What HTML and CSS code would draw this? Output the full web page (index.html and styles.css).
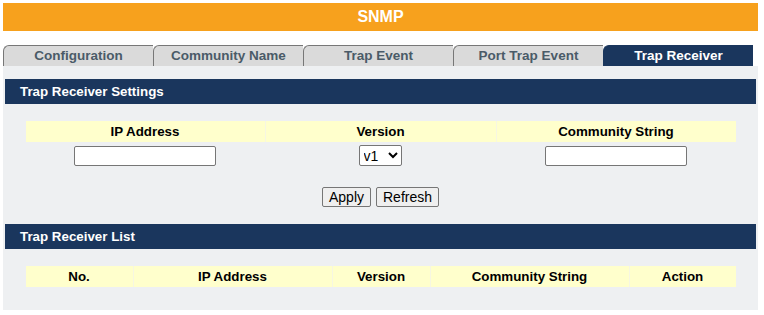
FILE: index.html
```html
<!DOCTYPE html>
<html>
<head>
<meta charset="utf-8">
<link rel="stylesheet" href="styles.css">
</head>
<body>
<div class="page">
  <div class="title">SNMP</div>
  <div class="tabs">
    <div class="tab">Configuration</div>
    <div class="tab">Community Name</div>
    <div class="tab">Trap Event</div>
    <div class="tab">Port Trap Event</div>
    <div class="tab active">Trap Receiver</div>
  </div>
  <div class="panel">
    <div class="section-head">Trap Receiver Settings</div>
    <div class="grid settings">
      <div class="hcell">IP Address</div>
      <div class="hcell">Version</div>
      <div class="hcell">Community String</div>
      <div class="cell"><input class="text" type="text"></div>
      <div class="cell"><select class="sel"><option>v1</option><option>v2c</option></select></div>
      <div class="cell"><input class="text" type="text"></div>
    </div>
    <div class="buttons">
      <button class="btn">Apply</button>
      <button class="btn">Refresh</button>
    </div>
    <div class="section-head second">Trap Receiver List</div>
    <div class="grid list">
      <div class="hcell">No.</div>
      <div class="hcell">IP Address</div>
      <div class="hcell">Version</div>
      <div class="hcell">Community String</div>
      <div class="hcell">Action</div>
    </div>
  </div>
</div>
</body>
</html>
```
FILE: styles.css
```css
html, body {
  margin: 0;
  padding: 0;
  background: #ffffff;
}
body {
  font-family: "Liberation Sans", Arial, sans-serif;
  font-size: 13.33px;
}
.page {
  padding: 3px 6px 0 3px;
}
.title {
  height: 28px;
  line-height: 28px;
  background: #f7a11d;
  color: #ffffff;
  font-weight: bold;
  font-size: 16px;
  text-align: center;
}
.tabs {
  display: flex;
  margin-top: 14px;
  height: 21px;
}
.tab {
  width: 150px;
  box-sizing: border-box;
  background: #dadada;
  border-top: 1px solid #777777;
  border-left: 1px solid #777777;
  border-top-left-radius: 6px;
  color: #4a5b68;
  font-weight: bold;
  font-size: 13.5px;
  text-align: center;
  line-height: 20px;
}
.tab.active {
  background: #1a365d;
  border-color: #1a365d;
  color: #ffffff;
}
.panel {
  background: #eef0f2;
  height: 244px;
  padding: 13px 2px 0 2px;
  box-sizing: border-box;
}
.section-head {
  height: 25px;
  line-height: 25px;
  background: #1a365d;
  color: #ffffff;
  font-weight: bold;
  padding-left: 15px;
}
.section-head.second {
  margin-top: 17px;
}
.grid {
  display: grid;
  width: 710px;
  margin: 0 auto;
}
.settings {
  margin-top: 17px;
  grid-template-columns: 239px 231px 240px;
}
.list {
  margin-top: 17px;
  grid-template-columns: 107px 199px 98px 199px 107px;
}
.hcell {
  background: #ffffcc;
  height: 21px;
  line-height: 21px;
  text-align: center;
  font-weight: bold;
  color: #000000;
  border-left: 1px solid #f6f6e2;
}
.hcell:first-child {
  border-left: none;
}
.cell {
  display: flex;
  justify-content: center;
  align-items: center;
  padding-top: 3px;
}
.text {
  width: 142px;
  height: 20px;
  box-sizing: border-box;
  border: 1px solid #767676;
  border-radius: 2px;
  background: #ffffff;
  margin: 0;
  padding: 1px 2px;
}
.sel {
  width: 43px;
  height: 21px;
  box-sizing: border-box;
  font-family: "Liberation Sans", Arial, sans-serif;
  font-size: 14px;
  border: 1px solid #767676;
  border-radius: 2px;
  background: #ffffff;
  color: #000000;
  margin: 0;
}
.buttons {
  display: flex;
  justify-content: center;
  gap: 5px;
  margin-top: 21px;
}
.btn {
  height: 20px;
  box-sizing: border-box;
  font-family: "Liberation Sans", Arial, sans-serif;
  font-size: 14px;
  padding: 0 6px;
  border: 1px solid #767676;
  border-radius: 2px;
  background: #efefef;
  color: #000000;
  line-height: 16px;
}
```
